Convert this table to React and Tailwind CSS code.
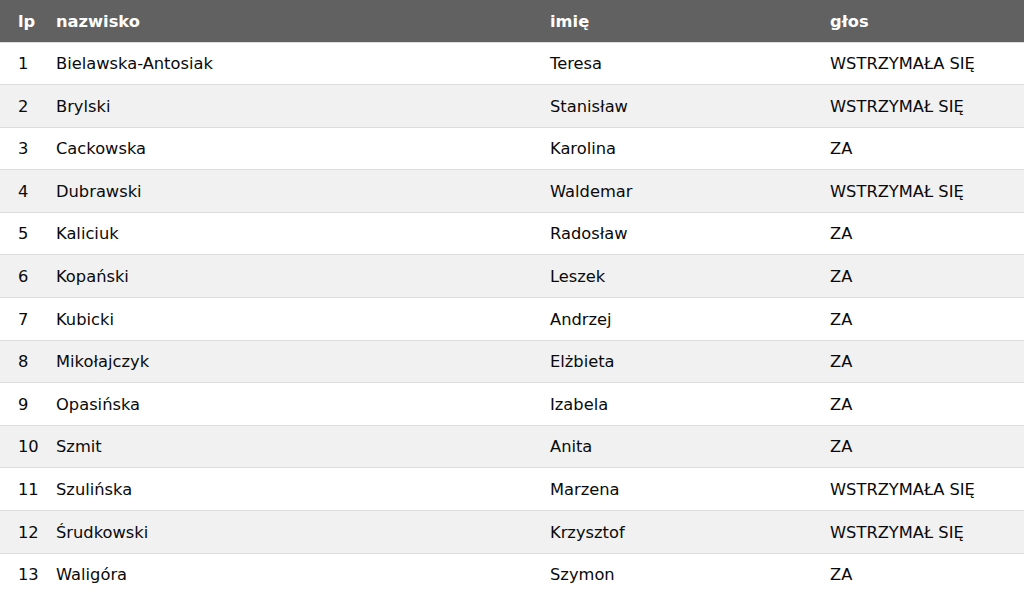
import React from 'react';

const rows = [
    ['1', 'Bielawska-Antosiak', 'Teresa', 'WSTRZYMAŁA SIĘ'],
    ['2', 'Brylski', 'Stanisław', 'WSTRZYMAŁ SIĘ'],
    ['3', 'Cackowska', 'Karolina', 'ZA'],
    ['4', 'Dubrawski', 'Waldemar', 'WSTRZYMAŁ SIĘ'],
    ['5', 'Kaliciuk', 'Radosław', 'ZA'],
    ['6', 'Kopański', 'Leszek', 'ZA'],
    ['7', 'Kubicki', 'Andrzej', 'ZA'],
    ['8', 'Mikołajczyk', 'Elżbieta', 'ZA'],
    ['9', 'Opasińska', 'Izabela', 'ZA'],
    ['10', 'Szmit', 'Anita', 'ZA'],
    ['11', 'Szulińska', 'Marzena', 'WSTRZYMAŁA SIĘ'],
    ['12', 'Śrudkowski', 'Krzysztof', 'WSTRZYMAŁ SIĘ'],
    ['13', 'Waligóra', 'Szymon', 'ZA'],
];

export default function App() {
    return (
        <div className="w-[1024px] h-[595px] overflow-hidden bg-white font-['DejaVu_Sans',Verdana,sans-serif] text-[16.3px] text-[#0a0a0a]">
            <table className="w-full border-collapse table-fixed">
                <colgroup>
                    <col className="w-[56px]" />
                    <col className="w-[494px]" />
                    <col className="w-[280px]" />
                    <col />
                </colgroup>
                <thead>
                    <tr className="h-[42px] bg-[#616161] text-white text-left">
                        <th className="pl-[18px] pt-[2px] font-bold">lp</th>
                        <th className="pt-[2px] font-bold">nazwisko</th>
                        <th className="pt-[2px] font-bold">imię</th>
                        <th className="pt-[2px] font-bold">głos</th>
                    </tr>
                </thead>
                <tbody>
                    {rows.map((row, i) => (
                        <tr
                            key={row[0]}
                            className={`h-[42.6px] border-t border-[#dddddd] ${i % 2 === 1 ? 'bg-[#f1f1f1]' : 'bg-white'}`}
                        >
                            <td className="pl-[18px] pt-[2px]">{row[0]}</td>
                            <td className="pt-[2px]">{row[1]}</td>
                            <td className="pt-[2px]">{row[2]}</td>
                            <td className="pt-[2px]">{row[3]}</td>
                        </tr>
                    ))}
                </tbody>
            </table>
        </div>
    );
}
